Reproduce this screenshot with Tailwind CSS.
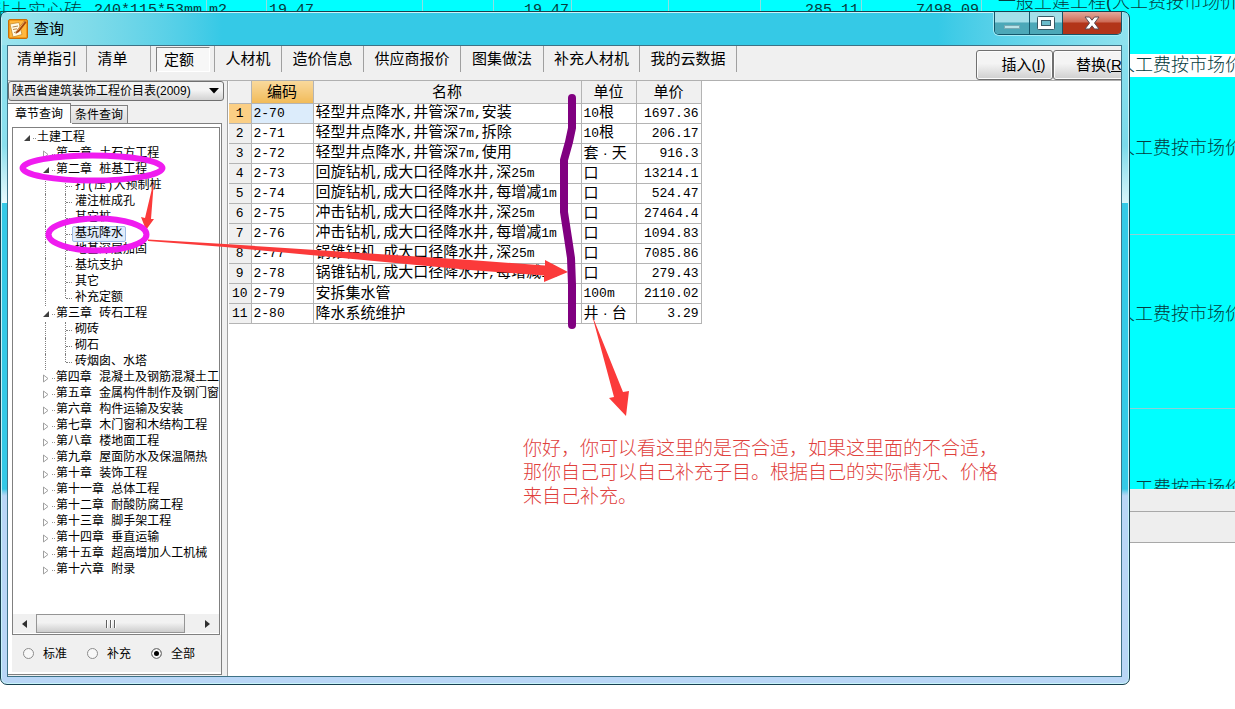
<!DOCTYPE html>
<html lang="zh-CN">
<head>
<meta charset="utf-8">
<title>查询</title>
<script src="https://cdn.jsdelivr.net/npm/@tailwindcss/browser@4"></script>
</head>
<body class="relative h-screen overflow-hidden bg-white text-black font-['Liberation_Sans','Noto_Sans_CJK_SC',sans-serif]">

<!-- Main application window behind the dialog -->
<div class="absolute inset-0 flex flex-col overflow-hidden whitespace-nowrap text-[18px] font-light text-[#063c40]" aria-hidden="true">
  <div class="flex h-[54px] shrink-0 items-start bg-[#00ffff]">
    <div class="flex h-[22px] w-[207px] shrink-0 items-center border-r border-[#8fdfe0]"><span class="-ml-2 leading-[22px]">粘土实心砖</span><span class="ml-3 font-['Liberation_Mono',monospace] text-[15px]">240*115*53mm</span></div>
    <div class="flex h-[22px] w-[60px] shrink-0 items-center border-r border-[#8fdfe0] pl-[2px] font-['Liberation_Mono',monospace] text-[15px]">m2</div>
    <div class="flex h-[22px] w-[156px] shrink-0 items-center border-r border-[#8fdfe0] pl-[2px] font-['Liberation_Mono',monospace] text-[15px]">19.47</div>
    <div class="h-[22px] w-[71px] shrink-0 border-r border-[#8fdfe0]"></div>
    <div class="flex h-[22px] w-[78px] shrink-0 items-center justify-end border-r border-[#8fdfe0] pr-[2px] font-['Liberation_Mono',monospace] text-[15px]">19.47</div>
    <div class="h-[22px] w-[97px] shrink-0 border-r border-[#8fdfe0]"></div>
    <div class="h-[22px] w-[92px] shrink-0 border-r border-[#8fdfe0]"></div>
    <div class="flex h-[22px] w-[101px] shrink-0 items-center justify-end border-r border-[#8fdfe0] pr-[2px] font-['Liberation_Mono',monospace] text-[15px]">285.11</div>
    <div class="flex h-[22px] w-[120px] shrink-0 items-center justify-end border-r border-[#8fdfe0] pr-[2px] font-['Liberation_Mono',monospace] text-[15px]">7498.09</div>
    <div class="pl-4 leading-[4px]">一般土建工程(人工费按市场价</div>
  </div>
  <div class="flex h-[23px] shrink-0 items-center justify-end bg-white"><span class="w-[118px]">人工费按市场价</span></div>
  <div class="flex h-[158px] shrink-0 items-start justify-end border-b border-[#8fd0d4] bg-[#00ffff] pt-[58px] leading-[27px]"><span class="w-[118px]">人工费按市场价</span></div>
  <div class="flex h-[174px] shrink-0 items-start justify-end border-b border-[#8fd0d4] bg-[#00ffff] pt-[66px] leading-[27px]"><span class="w-[118px]">人工费按市场价</span></div>
  <div class="flex h-[80px] shrink-0 items-start justify-end overflow-hidden bg-[#00ffff] pt-[66px] leading-[27px]"><span class="w-[118px]">人工费按市场价</span></div>
  <div class="h-[23px] shrink-0 border-b border-[#a8a8a8] bg-[#eeeeee]"></div>
  <div class="h-[31px] shrink-0 border-b border-[#a8a8a8] bg-[#eeeeee]"></div>
</div>

<!-- Query dialog -->
<section class="absolute top-[11px] right-[105px] bottom-[24px] left-0 flex flex-col overflow-hidden rounded-[7px] border border-[#17404f] bg-linear-to-b from-[#35c9e6] from-0% via-[#35c9e6] via-71% to-[#b9d6f6] to-72% pr-[7px] pb-[7px] pl-[6px] shadow-[inset_0_0_0_1px_#c8f4fa]" aria-label="查询">
  <div class="pointer-events-none absolute top-px right-px h-[190px] w-[6px] bg-linear-to-b from-[#8fe2ee] via-[#7ad9ea] via-70% to-[#d8f5fa]"></div>
  <div class="pointer-events-none absolute top-px left-px h-[190px] w-[5px] bg-linear-to-b from-[#8fe2ee] via-[#8adfee] via-70% to-[#eafafd]"></div>
  <div class="pointer-events-none absolute top-px left-px h-[32px] w-[220px] bg-linear-to-r from-[#9ce4ee] via-[#7fdbe9] via-40% to-[#35c9e6]"></div>
  <div class="pointer-events-none absolute top-px right-px h-[32px] w-[190px] bg-linear-to-l from-[#8fe2ee] to-[#35c9e6]"></div>

  <header class="relative flex h-[33px] shrink-0 items-start">
    <div class="flex h-[33px] flex-1 items-center gap-[6px] pl-px">
      <svg class="size-5" viewBox="0 0 20 20" aria-hidden="true">
        <rect x="0.5" y="0.5" width="19" height="19" rx="1.5" fill="#f59a16" stroke="#c76e08"/>
        <rect x="2" y="2" width="16" height="16" fill="#ffb83e"/>
        <path d="M2 5 11 3.5 14 15.5 5 18Z" fill="#fffbe8" stroke="#c98a28" stroke-width="0.8"/>
        <path d="M4.500 8 10 7M5 10.500 9 9.800M6 13.500 10 12.500" stroke="#b5864a" stroke-width="1"/>
        <path d="M16.500 1.500 18.500 3.500 11 13 7.500 15 9 11Z" fill="#a6470c"/>
        <path d="M16.500 2.500 9.500 11.500" stroke="#ffd37a" stroke-width="0.8"/>
      </svg>
      <h1 class="text-[15px] leading-5">查询</h1>
    </div>
    <div class="flex h-[23px] overflow-hidden rounded-b-[5px] border border-t-0 border-[#14566a] shadow-[0_0_0_1px_#a5ecf5]">
      <button class="flex w-[35px] items-center justify-center border-r border-[#14566a] bg-linear-to-b from-[#a4dfe9] from-45% to-[#4ca8b8] to-50%" aria-label="最小化">
        <svg class="mt-2 h-1 w-4" viewBox="0 0 16 4"><rect x="0.500" y="0.500" width="15" height="3" fill="#b9e3e8" stroke="#78aab5"/></svg>
      </button>
      <button class="flex w-[33px] items-center justify-center border-r border-[#14566a] bg-linear-to-b from-[#a4dfe9] from-45% to-[#4ca8b8] to-50%" aria-label="最大化">
        <svg class="h-[14px] w-[18px]" viewBox="0 0 18 14"><rect x="0.500" y="0.500" width="17" height="13" rx="1" fill="#fff" stroke="#385a66"/><rect x="4.500" y="4.500" width="9" height="5" fill="#6bbccb" stroke="#385a66"/></svg>
      </button>
      <button class="flex w-[58px] items-center justify-center bg-linear-to-b from-[#e0a99d] from-0% via-[#cd6a55] via-45% to-[#b23419] to-50%" aria-label="关闭">
        <svg class="h-[14px] w-[16px]" viewBox="0 0 16 14"><path d="M1 1H5.500L8 4.200 10.500 1H15L10.500 7 15 13H10.500L8 9.800 5.500 13H1L5.500 7Z" fill="#fff" stroke="#5a4a52"/></svg>
      </button>
    </div>
  </header>

  <div class="relative flex min-h-0 flex-1 flex-col overflow-hidden border border-[#3e7286] bg-[#f0f0f0]">
    <!-- Toolbar -->
    <div class="flex h-[35px] shrink-0 items-start overflow-hidden border-b border-[#b0b0b0] text-[15px] whitespace-nowrap">
      <nav class="flex h-[26px] flex-1 leading-6">
        <button class="w-[79px] shrink-0 border-r border-[#a0a0a0] pb-px">清单指引</button>
        <button class="w-[64px] shrink-0 border-r border-[#a0a0a0] pr-3 pb-px">清单</button>
        <div class="w-[64px] shrink-0 border-r border-[#a0a0a0] px-1 pt-px pl-[5px]"><button class="h-[25px] w-[54px] border border-[#808080] border-r-white border-b-white bg-[#f7f7f7] pr-2 leading-6" aria-pressed="true">定额</button></div>
        <button class="w-[67px] shrink-0 border-r border-[#a0a0a0] pb-px">人材机</button>
        <button class="w-[82px] shrink-0 border-r border-[#a0a0a0] pb-px">造价信息</button>
        <button class="w-[97px] shrink-0 border-r border-[#a0a0a0] pb-px">供应商报价</button>
        <button class="w-[83px] shrink-0 border-r border-[#a0a0a0] pb-px">图集做法</button>
        <button class="w-[96px] shrink-0 border-r border-[#a0a0a0] pb-px">补充人材机</button>
        <button class="w-[97px] shrink-0 border-r border-[#a0a0a0] pb-px">我的云数据</button>
      </nav>
      <div class="-mr-2 flex shrink-0 pt-1">
        <button class="h-[30px] w-[77px] rounded-[3px] border border-[#707070] bg-linear-to-b from-[#f4f4f4] from-45% to-[#cfcfcf] pl-[18px] shadow-[inset_0_0_0_1px_#fcfcfc]">插入(<u>I</u>)</button>
        <button class="h-[30px] w-[76px] rounded-[3px] border border-[#707070] bg-linear-to-b from-[#f4f4f4] from-45% to-[#cfcfcf] pl-[22px] text-left shadow-[inset_0_0_0_1px_#fcfcfc]">替换(<u>R</u>)</button>
      </div>
    </div>

    <div class="flex min-h-0 flex-1">
      <!-- Chapter pane -->
      <aside class="flex w-[216px] shrink-0 flex-col text-xs">
        <div class="relative">
          <select class="block h-5 w-full appearance-none rounded-[3px] border border-[#707070] bg-linear-to-b from-[#f4f4f4] from-45% to-[#d2d2d2] pl-[3px] text-xs leading-[18px]" aria-label="价目表">
            <option>陕西省建筑装饰工程价目表(2009)</option>
          </select>
          <svg class="pointer-events-none absolute top-[7px] right-[5px] h-[6px] w-[10px]" viewBox="0 0 10 6"><path d="M0 0H10L5 5.500Z"/></svg>
        </div>
        <div class="flex h-[22px] items-end pt-[2px]" role="tablist">
          <button class="h-5 w-[63px] border-t border-r border-[#808080] bg-white leading-[18px]" role="tab" aria-selected="true">章节查询</button>
          <button class="h-[18px] w-[57px] border border-l-0 border-b-0 border-[#808080] bg-linear-to-b from-[#f2f2f2] to-[#dcdcdc] leading-4" role="tab" aria-selected="false">条件查询</button>
        </div>
        <div class="mr-[2px] mb-px flex min-h-0 flex-1 flex-col border-r border-b border-[#808080] bg-white pl-1">
          <div class="ml-[60px] h-1 shrink-0 border-t border-[#808080]"></div>
          <div class="mr-px flex min-h-0 flex-1 flex-col border border-[#808080]">
            <ul id="tree" class="min-h-0 flex-1 overflow-hidden pt-[2px] font-['Liberation_Mono','Noto_Sans_CJK_SC',monospace] leading-4 whitespace-nowrap" role="tree"></ul>
            <div class="mb-px flex h-[19px] shrink-0 items-center bg-[#f0f0f0]">
              <button class="flex w-[23px] justify-center" aria-label="向左滚动"><svg class="h-2 w-[5px]" viewBox="0 0 5 8"><path d="M5 0V8L0 4Z" fill="#303030"/></svg></button>
              <div class="flex h-[19px] w-[149px] items-center justify-center gap-[2px] border border-[#959595] bg-linear-to-b from-[#f2f2f2] from-45% to-[#cdcdcd]">
                <i class="h-2 w-[2px] border-l border-[#606060] bg-white"></i><i class="h-2 w-[2px] border-l border-[#606060] bg-white"></i><i class="h-2 w-[2px] border-l border-[#606060] bg-white"></i>
              </div>
              <button class="ml-3 flex w-5 justify-center" aria-label="向右滚动"><svg class="h-2 w-[5px]" viewBox="0 0 5 8"><path d="M0 0V8L5 4Z" fill="#303030"/></svg></button>
            </div>
          </div>
          <div class="mb-[2px] flex h-[37px] shrink-0 items-center bg-[#f0f0f0] pl-[11px]">
            <label class="flex w-16 items-center gap-[9px]"><input type="radio" name="scope" class="size-[11px] appearance-none rounded-full border border-[#8c8c8c] bg-[#f8f8f8]">标准</label>
            <label class="flex w-16 items-center gap-[9px]"><input type="radio" name="scope" class="size-[11px] appearance-none rounded-full border border-[#8c8c8c] bg-[#f8f8f8]">补充</label>
            <label class="flex w-16 items-center gap-[9px]"><input type="radio" name="scope" checked class="size-[11px] appearance-none rounded-full border border-[#8c8c8c] bg-black shadow-[inset_0_0_0_2px_#f8f8f8]">全部</label>
          </div>
        </div>
      </aside>

      <!-- Quota items -->
      <main class="ml-[3px] min-w-0 flex-1 border-l border-[#a0a0a0] bg-white">
        <table class="ml-px table-fixed border-collapse text-[15px] leading-4 whitespace-nowrap">
          <colgroup><col class="w-[22px]"><col class="w-[62px]"><col class="w-[268px]"><col class="w-[55px]"><col class="w-[65px]"></colgroup>
          <thead>
            <tr class="h-[22px] bg-[#f0f0f0]">
              <th class="border-r border-b border-[#b4b4b4]"></th>
              <th class="border-r border-b border-[#b4b4b4] bg-linear-to-b from-[#f9d99b] to-[#f1bb58] p-0 font-normal" scope="col">编码</th>
              <th class="border-r border-b border-[#b4b4b4] p-0 font-normal" scope="col">名称</th>
              <th class="border-r border-b border-[#b4b4b4] p-0 font-normal" scope="col">单位</th>
              <th class="border-r border-b border-[#b4b4b4] p-0 font-normal" scope="col">单价</th>
            </tr>
          </thead>
          <tbody id="items"></tbody>
        </table>
      </main>
    </div>
  </div>
</section>

<!-- Hand-drawn annotations over the dialog -->
<svg class="pointer-events-none absolute top-0 left-0 h-[709px] w-[1235px]" viewBox="0 0 1235 709" aria-hidden="true">
  <g fill="#fb3a3a">
    <path d="M154 180 151 219 154 219 146 230 141 217 145 218Z"/>
    <path d="M148 239.500 225 244 470 260 545 265.500 545 260 568 272 544 282 544 275.500 470 270 225 247 148 241Z"/>
    <path d="M592 315 623 392 629 391 626 416 609 398 614 397Z"/>
  </g>
  <g fill="none" stroke="#f01cf0" stroke-width="6">
    <ellipse cx="92.500" cy="168" rx="70" ry="12.500"/>
    <ellipse cx="97.500" cy="234.500" rx="49" ry="16"/>
  </g>
  <path d="M572 98 572 128 569 142 564 160 564 212 568 238 571 258 572 285 572 325" fill="none" stroke="#800080" stroke-width="8" stroke-linecap="round" stroke-linejoin="round"/>
</svg>
<p class="absolute top-[437px] left-[523px] text-[19px] leading-6 font-light whitespace-nowrap text-[#e0403c]">你好，你可以看这里的是否合适，如果这里面的不合适，<br>那你自己可以自己补充子目。根据自己的实际情况、价格<br>来自己补充。</p>

<script>
  // [level, label, open | closed | leaf state]
  const chapters = [
    [0, '土建工程', 'open'], [1, '第一章 土石方工程'], [1, '第二章 桩基工程', 'open'],
    [2, '打(压)入预制桩'], [2, '灌注桩成孔'], [2, '其它桩'], [2, '基坑降水', 'selected'],
    [2, '地基深层加固'], [2, '基坑支护'], [2, '其它'], [2, '补充定额', 'last'],
    [1, '第三章 砖石工程', 'open'], [2, '砌砖'], [2, '砌石'], [2, '砖烟囱、水塔', 'last'],
    [1, '第四章 混凝土及钢筋混凝土工'], [1, '第五章 金属构件制作及钢门窗'], [1, '第六章 构件运输及安装'],
    [1, '第七章 木门窗和木结构工程'], [1, '第八章 楼地面工程'], [1, '第九章 屋面防水及保温隔热'],
    [1, '第十章 装饰工程'], [1, '第十一章 总体工程'], [1, '第十二章 耐酸防腐工程'],
    [1, '第十三章 脚手架工程'], [1, '第十四章 垂直运输'], [1, '第十五章 超高增加人工机械'], [1, '第十六章 附录']
  ];
  const openMark = '<svg class="h-[8px] w-[8px] shrink-0" viewBox="0 0 8 8"><path d="M7 1V7H1Z" fill="#404040"/></svg>';
  const closedMark = '<svg class="h-[9px] w-[8px] shrink-0" viewBox="0 0 8 9"><path d="M1.500 1V8L6 4.500Z" fill="#fff" stroke="#a0a0a0"/></svg>';
  const dot = '<i class="ml-[2px] w-[3px] border-t border-dotted border-[#909090]"></i>';
  document.getElementById('tree').innerHTML = chapters.map(([level, label, state]) => {
    if (level < 2) {
      const pad = level === 0 ? 'pl-[10px]' : 'pl-[29px]';
      return `<li role="treeitem" class="flex h-4 items-center ${pad}">${state === 'open' ? openMark : closedMark}${dot}<span class="pl-px">${label}</span></li>`;
    }
    const line = state === 'last' ? 'h-2 self-start' : 'h-4';
    const mark = state === 'selected'
      ? 'rounded-[2px] border border-[#9dbbe4] bg-[#e0edfb] px-[2px] leading-[14px]'
      : 'px-[3px]';
    return `<li role="treeitem" class="flex h-4 items-center pl-[32px]"><i class="h-4 w-5 border-l border-dotted border-[#808080]"></i><i class="w-0 border-l border-dotted border-[#808080] ${line}"></i><i class="w-[6px] border-t border-dotted border-[#808080]"></i><span class="${mark}">${label}</span></li>`;
  }).join('');

  const items = [
    ['2-70', '轻型井点降水,井管深7m,安装', '10根', '1697.36'],
    ['2-71', '轻型井点降水,井管深7m,拆除', '10根', '206.17'],
    ['2-72', '轻型井点降水,井管深7m,使用', '套 · 天', '916.3'],
    ['2-73', '回旋钻机,成大口径降水井,深25m', '口', '13214.1'],
    ['2-74', '回旋钻机,成大口径降水井,每增减1m', '口', '524.47'],
    ['2-75', '冲击钻机,成大口径降水井,深25m', '口', '27464.4'],
    ['2-76', '冲击钻机,成大口径降水井,每增减1m', '口', '1094.83'],
    ['2-77', '锅锥钻机,成大口径降水井,深25m', '口', '7085.86'],
    ['2-78', '锅锥钻机,成大口径降水井,每增减1m', '口', '279.43'],
    ['2-79', '安拆集水管', '100m', '2110.02'],
    ['2-80', '降水系统维护', '井 · 台', '3.29']
  ];
  // Latin letters and digits are set in the narrower monospace face
  const mono = s => s.replace(/[\x21-\x7e]+/g, m => `<span class="font-['Liberation_Mono',monospace] text-[13px]">${m}</span>`);
  document.getElementById('items').innerHTML = items.map(([code, name, unit, price], i) => `
    <tr class="h-5">
      <th scope="row" class="border-r border-b border-[#b4b4b4] p-0 font-normal ${i === 0 ? 'bg-[#fbcf85]' : 'bg-[#f0f0f0]'}">${mono(String(i + 1))}</th>
      <td class="border-r border-b border-[#b4b4b4] py-0 pr-0 pl-[2px] ${i === 0 ? 'bg-[#dcecfb]' : ''}">${mono(code)}</td>
      <td class="border-r border-b border-[#b4b4b4] py-0 pr-0 pl-[2px]">${mono(name)}</td>
      <td class="border-r border-b border-[#b4b4b4] py-0 pr-0 pl-[2px]">${mono(unit)}</td>
      <td class="border-r border-b border-[#b4b4b4] py-0 pr-[2px] pl-0 text-right">${mono(price)}</td>
    </tr>`).join('');
</script>
</body>
</html>
